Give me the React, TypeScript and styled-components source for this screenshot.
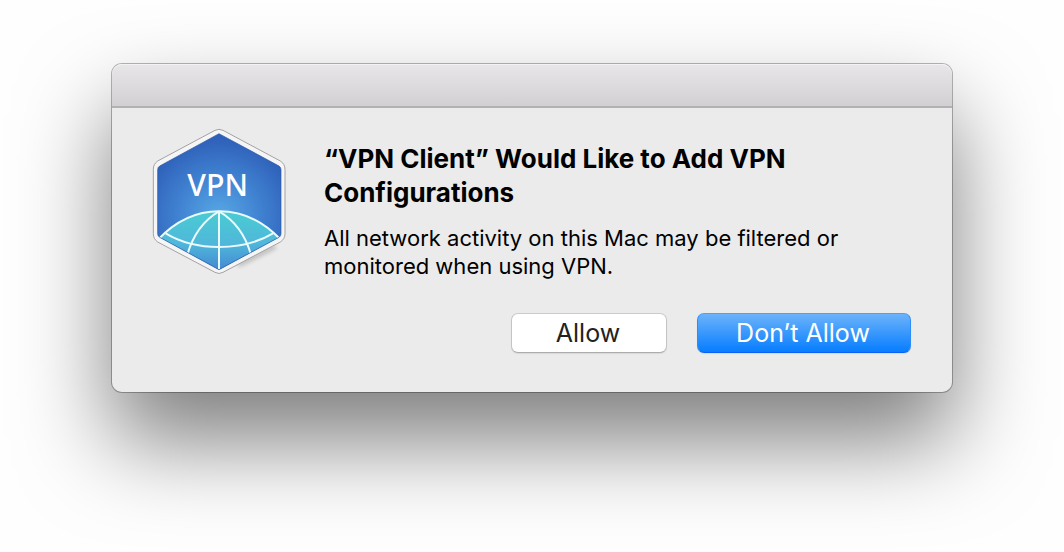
import React from "react";
import styled, { createGlobalStyle } from "styled-components";

const GlobalStyle = createGlobalStyle`
  *, *::before, *::after { box-sizing: border-box; }
  body {
    margin: 0;
    background: #fefefe;
    font-family: Inter, "Liberation Sans", sans-serif;
    color: #000;
  }
`;

const Desktop = styled.main`
  display: flex;
  justify-content: center;
  align-items: flex-start;
  min-height: 100vh;
  padding: 63px 24px;
  overflow: hidden;
`;

const Dialog = styled.section`
  width: 100%;
  max-width: 842px;
  border: 1px solid rgba(0, 0, 0, 0.28);
  border-radius: 11px;
  background: #ebebeb;
  background-clip: padding-box;
  box-shadow: 0 48px 90px rgba(0, 0, 0, 0.5);
`;

const TitleBar = styled.header`
  height: 44px;
  border-bottom: 2px solid #b3b1b3;
  border-radius: 10px 10px 0 0;
  background: linear-gradient(#e8e6e8, #d2d0d2);
  box-shadow: inset 0 1px 0 #f4f3f4;
`;

const Content = styled.div`
  display: flex;
  gap: 38px;
  padding: 20px 41px 39px 40px;
`;

const AppIcon = styled.svg`
  flex: none;
  width: 134px;
  height: 147px;
`;

const Details = styled.div`
  flex: 1;
  min-width: 0;
  padding-top: 14px;
`;

const Title = styled.h1`
  margin: 0;
  font-size: 26px;
  line-height: 34px;
  font-weight: 700;
`;

const Message = styled.p`
  margin: 14px 0 0;
  font-size: 22px;
  line-height: 28px;
`;

const Actions = styled.div`
  display: flex;
  justify-content: flex-end;
  gap: 30px;
  margin-top: 33px;
`;

const Button = styled.button<{ $primary?: boolean }>`
  width: ${(p) => (p.$primary ? 214 : 156)}px;
  height: 40px;
  padding: 0 2px 0 0;
  border: 1px solid;
  border-color: ${(p) => (p.$primary ? "#4ba0f8 #2d8bfa #0a62f5" : "#cbcbcb #c4c4c4 #acacac")};
  border-radius: 7px;
  background: ${(p) => (p.$primary ? "linear-gradient(#6cb3fa, #067dff)" : "#fff")};
  color: ${(p) => (p.$primary ? "#fff" : "#222")};
  box-shadow: 0 1px 1px rgba(0, 0, 0, 0.08);
  font-family: inherit;
  font-size: 25px;
  line-height: 36px;
  font-weight: 400;
`;

const HEX = "M238 41 L418 138 Q424 142 424 149 V341 Q424 348 418 352 L238 449 L60 352 Q54 348 54 341 V149 Q54 142 60 138 Z";

function VpnIcon() {
  return (
    <AppIcon viewBox="37 24 402 441" role="img" aria-label="VPN Client">
      <defs>
        <radialGradient id="sky" cx="238" cy="290" r="260" gradientUnits="userSpaceOnUse">
          <stop offset="0" stopColor="#58a9e5" />
          <stop offset="0.5" stopColor="#3f80d0" />
          <stop offset="1" stopColor="#2b59b4" />
        </radialGradient>
        <linearGradient id="globe" x1="0" y1="272" x2="0" y2="450" gradientUnits="userSpaceOnUse">
          <stop offset="0" stopColor="#48cdd2" />
          <stop offset="0.55" stopColor="#50b7da" />
          <stop offset="1" stopColor="#4389d2" />
        </linearGradient>
        <clipPath id="hexagon">
          <path d={HEX} />
        </clipPath>
        <filter id="soft" x="-20%" y="-20%" width="140%" height="140%">
          <feGaussianBlur stdDeviation="7" />
        </filter>
      </defs>
      <path d="M290 430 L400 374 L412 385 L300 440 Z" fill="#000" opacity="0.2" filter="url(#soft)" />
      <path
        d="M226 31 Q238 25 250 31 L422 123 Q436 132 436 148 V341 Q436 357 422 366 L250 457 Q238 464 226 457 L54 366 Q41 357 41 341 V148 Q41 132 54 123 Z"
        fill="#f6f5f6"
        stroke="#a2a2a4"
        strokeWidth="3"
      />
      <path d={HEX} fill="url(#sky)" />
      <g clipPath="url(#hexagon)">
        <path d="M54 360 Q135 274 238 274 Q344 274 424 360 V464 H54 Z" fill="url(#globe)" />
        <g fill="none" stroke="#e9fbff" strokeWidth="6">
          <path d="M54 360 Q135 274 238 274 Q344 274 424 360" />
          <path d="M78 340 Q146 381 238 381 Q332 381 400 340" />
          <path d="M238 274 V454" />
          <path d="M238 274 Q169 314 143 404" />
          <path d="M238 274 Q308 314 334 404" />
        </g>
      </g>
      <path d={HEX} fill="none" stroke="#2554a6" strokeOpacity="0.65" strokeWidth="3" />
      <text
        x="234"
        y="228"
        fill="#fff"
        textAnchor="middle"
        fontFamily='"Noto Sans", sans-serif'
        fontSize="91"
        fontWeight="500"
      >
        VPN
      </text>
    </AppIcon>
  );
}

export default function App() {
  return (
    <>
      <GlobalStyle />
      <Desktop>
        <Dialog role="alertdialog" aria-labelledby="title" aria-describedby="message">
          <TitleBar />
          <Content>
            <VpnIcon />
            <Details>
              <Title id="title">“VPN Client” Would Like to Add VPN Configurations</Title>
              <Message id="message">
                All network activity on this Mac may be filtered or monitored when using VPN.
              </Message>
              <Actions>
                <Button type="button">Allow</Button>
                <Button type="button" $primary>
                  Don’t Allow
                </Button>
              </Actions>
            </Details>
          </Content>
        </Dialog>
      </Desktop>
    </>
  );
}
